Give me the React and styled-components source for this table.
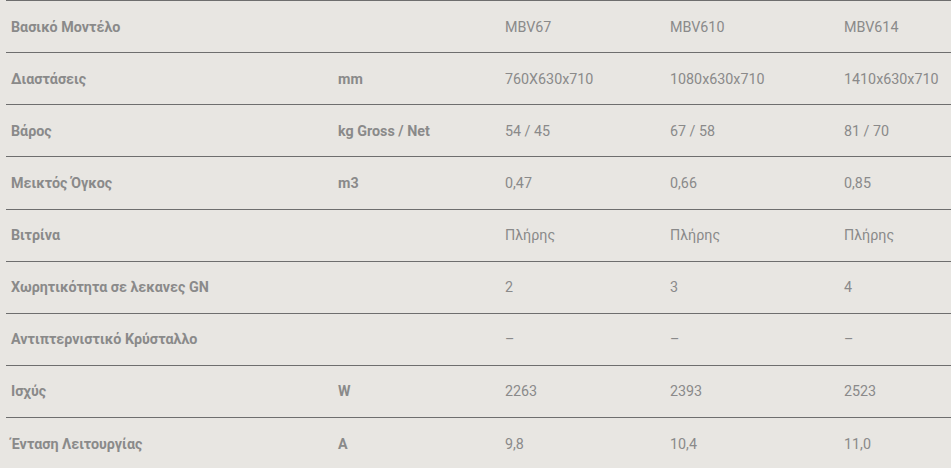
import styled, { createGlobalStyle } from 'styled-components';

const GlobalStyle = createGlobalStyle`
  html, body {
    margin: 0;
    padding: 0;
    background: #e8e6e2;
  }
  body {
    font-family: 'Roboto', 'Liberation Sans', sans-serif;
  }
`;

const columns = [327, 167, 165, 174, 112];

const rows = [
  { label: 'Βασικό Μοντέλο', unit: '', values: ['MBV67', 'MBV610', 'MBV614'] },
  { label: 'Διαστάσεις', unit: 'mm', values: ['760X630x710', '1080x630x710', '1410x630x710'] },
  { label: 'Βάρος', unit: 'kg Gross / Net', values: ['54 / 45', '67 / 58', '81 / 70'] },
  { label: 'Μεικτός Όγκος', unit: 'm3', values: ['0,47', '0,66', '0,85'] },
  { label: 'Βιτρίνα', unit: '', values: ['Πλήρης', 'Πλήρης', 'Πλήρης'] },
  { label: 'Χωρητικότητα σε λεκανες GN', unit: '', values: ['2', '3', '4'] },
  { label: 'Αντιπτερνιστικό Κρύσταλλο', unit: '', values: ['–', '–', '–'] },
  { label: 'Ισχύς', unit: 'W', values: ['2263', '2393', '2523'] },
  { label: 'Ένταση Λειτουργίας', unit: 'A', values: ['9,8', '10,4', '11,0'] },
];

export default function App() {
  return (
    <>
      <GlobalStyle />
      <Wrapper>
        <SpecTable>
          <colgroup>
            {columns.map((w, i) => (
              <Col key={i} $w={w} />
            ))}
          </colgroup>
          <tbody>
            {rows.map((r) => (
              <Row key={r.label}>
                <Cell $bold>{r.label}</Cell>
                <Cell $bold>{r.unit}</Cell>
                {r.values.map((v, i) => (
                  <Cell key={i}>{v}</Cell>
                ))}
              </Row>
            ))}
          </tbody>
        </SpecTable>
      </Wrapper>
    </>
  );
}

const Wrapper = styled.div`
  padding-left: 6px;
  width: 951px;
  box-sizing: border-box;
`;

const SpecTable = styled.table`
  border-collapse: collapse;
  table-layout: fixed;
  width: 945px;
`;

const Col = styled.col`
  width: ${(p) => p.$w}px;
`;

const Row = styled.tr`
  border-top: 1px solid #6e6e6e;
`;

const Cell = styled.td`
  height: 52.125px;
  padding: 0 5px;
  box-sizing: border-box;
  vertical-align: middle;
  font-size: 14.3px;
  font-weight: ${(p) => (p.$bold ? 700 : 400)};
  color: #8a8a8a;
  white-space: nowrap;
`;
